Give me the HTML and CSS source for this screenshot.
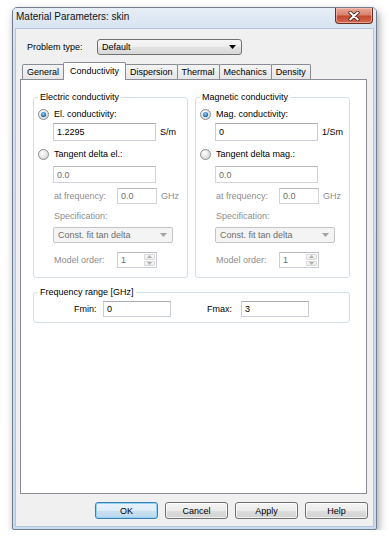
FILE: index.html
```html
<!DOCTYPE html>
<html>
<head>
<meta charset="utf-8">
<title>Material Parameters: skin</title>
<link rel="stylesheet" href="styles.css">
</head>
<body>
<div class="window">
  <div class="titlebar">
    <span class="title">Material Parameters: skin</span>
    <div class="close-btn">
      <svg width="12" height="10" viewBox="0 0 12 10">
        <path d="M2.2 1.6 L9.8 8.4 M9.8 1.6 L2.2 8.4" stroke="#4a2019" stroke-width="3.6" stroke-linecap="round" fill="none"/>
        <path d="M2.2 1.6 L9.8 8.4 M9.8 1.6 L2.2 8.4" stroke="#ffffff" stroke-width="2" stroke-linecap="round" fill="none"/>
      </svg>
    </div>
  </div>
  <div class="client">
    <div class="problem-row">
      <span class="problem-label">Problem type:</span>
      <div class="combo">
        <span>Default</span>
        <svg class="arrow" width="7" height="4" viewBox="0 0 7 4"><path d="M0 0H7L3.5 4Z" fill="#000"/></svg>
      </div>
    </div>
    <div class="tabs">
      <div class="tab">General</div>
      <div class="tab tab-active">Conductivity</div>
      <div class="tab">Dispersion</div>
      <div class="tab">Thermal</div>
      <div class="tab">Mechanics</div>
      <div class="tab">Density</div>
    </div>
    <div class="panel">
      <div class="group-row">
        <fieldset class="group">
          <legend>Electric conductivity</legend>
          <div class="radio-row">
            <svg class="radio" width="11" height="11" viewBox="0 0 11 11">
              <defs><radialGradient id="rg1" cx="0.4" cy="0.35" r="0.7"><stop offset="0" stop-color="#ffffff"/><stop offset="1" stop-color="#d4d4d4"/></radialGradient>
              <radialGradient id="dot1" cx="0.45" cy="0.4" r="0.6"><stop offset="0" stop-color="#8fd3ff"/><stop offset="1" stop-color="#1a5b9a"/></radialGradient></defs>
              <circle cx="5.5" cy="5.5" r="5" fill="url(#rg1)" stroke="#8a8d91"/>
              <circle cx="5.5" cy="5.5" r="2.6" fill="url(#dot1)"/>
            </svg>
            <span>El. conductivity:</span>
          </div>
          <div class="indent field-row row-value">
            <div class="edit edit-wide">1.2295</div>
            <span class="unit">S/m</span>
          </div>
          <div class="radio-row radio-row-2">
            <svg class="radio" width="11" height="11" viewBox="0 0 11 11">
              <defs><radialGradient id="rg2" cx="0.4" cy="0.35" r="0.7"><stop offset="0" stop-color="#ffffff"/><stop offset="1" stop-color="#d4d4d4"/></radialGradient></defs>
              <circle cx="5.5" cy="5.5" r="5" fill="url(#rg2)" stroke="#8a8d91"/>
            </svg>
            <span>Tangent delta el.:</span>
          </div>
          <div class="indent field-row row-tan">
            <div class="edit edit-wide edit-disabled">0.0</div>
          </div>
          <div class="indent field-row row-freq">
            <span class="dim-label">at frequency:</span>
            <div class="edit edit-short edit-disabled">0.0</div>
            <span class="unit dim">GHz</span>
          </div>
          <div class="spec-label dim">Specification:</div>
          <div class="dropdown">
            <span>Const. fit tan delta</span>
            <svg class="arrow" width="7" height="4" viewBox="0 0 7 4"><path d="M0 0H7L3.5 4Z" fill="#a3a3a3"/></svg>
          </div>
          <div class="indent field-row row-order">
            <span class="dim-label">Model order:</span>
            <div class="spin">
              <span class="spin-value">1</span>
              <div class="spin-buttons">
                <div class="spin-btn"><svg width="5" height="3" viewBox="0 0 5 3"><path d="M0 3H5L2.5 0Z" fill="#b0b0b0"/></svg></div>
                <div class="spin-btn"><svg width="5" height="3" viewBox="0 0 5 3"><path d="M0 0H5L2.5 3Z" fill="#b0b0b0"/></svg></div>
              </div>
            </div>
          </div>
        </fieldset>
        <fieldset class="group">
          <legend>Magnetic conductivity</legend>
          <div class="radio-row">
            <svg class="radio" width="11" height="11" viewBox="0 0 11 11">
              <defs><radialGradient id="rg3" cx="0.4" cy="0.35" r="0.7"><stop offset="0" stop-color="#ffffff"/><stop offset="1" stop-color="#d4d4d4"/></radialGradient>
              <radialGradient id="dot3" cx="0.45" cy="0.4" r="0.6"><stop offset="0" stop-color="#8fd3ff"/><stop offset="1" stop-color="#1a5b9a"/></radialGradient></defs>
              <circle cx="5.5" cy="5.5" r="5" fill="url(#rg3)" stroke="#8a8d91"/>
              <circle cx="5.5" cy="5.5" r="2.6" fill="url(#dot3)"/>
            </svg>
            <span>Mag. conductivity:</span>
          </div>
          <div class="indent field-row row-value">
            <div class="edit edit-wide">0</div>
            <span class="unit">1/Sm</span>
          </div>
          <div class="radio-row radio-row-2">
            <svg class="radio" width="11" height="11" viewBox="0 0 11 11">
              <defs><radialGradient id="rg4" cx="0.4" cy="0.35" r="0.7"><stop offset="0" stop-color="#ffffff"/><stop offset="1" stop-color="#d4d4d4"/></radialGradient></defs>
              <circle cx="5.5" cy="5.5" r="5" fill="url(#rg4)" stroke="#8a8d91"/>
            </svg>
            <span>Tangent delta mag.:</span>
          </div>
          <div class="indent field-row row-tan">
            <div class="edit edit-wide edit-disabled">0.0</div>
          </div>
          <div class="indent field-row row-freq">
            <span class="dim-label">at frequency:</span>
            <div class="edit edit-short edit-disabled">0.0</div>
            <span class="unit dim">GHz</span>
          </div>
          <div class="spec-label dim">Specification:</div>
          <div class="dropdown">
            <span>Const. fit tan delta</span>
            <svg class="arrow" width="7" height="4" viewBox="0 0 7 4"><path d="M0 0H7L3.5 4Z" fill="#a3a3a3"/></svg>
          </div>
          <div class="indent field-row row-order">
            <span class="dim-label">Model order:</span>
            <div class="spin">
              <span class="spin-value">1</span>
              <div class="spin-buttons">
                <div class="spin-btn"><svg width="5" height="3" viewBox="0 0 5 3"><path d="M0 3H5L2.5 0Z" fill="#b0b0b0"/></svg></div>
                <div class="spin-btn"><svg width="5" height="3" viewBox="0 0 5 3"><path d="M0 0H5L2.5 3Z" fill="#b0b0b0"/></svg></div>
              </div>
            </div>
          </div>
        </fieldset>
      </div>
      <fieldset class="group group-freq">
        <legend>Frequency range [GHz]</legend>
        <div class="freq-row">
          <span class="fmin-label">Fmin:</span>
          <div class="edit edit-range">0</div>
          <span class="fmax-label">Fmax:</span>
          <div class="edit edit-range">3</div>
        </div>
      </fieldset>
    </div>
    <div class="buttons">
      <div class="btn btn-default">OK</div>
      <div class="btn">Cancel</div>
      <div class="btn">Apply</div>
      <div class="btn">Help</div>
    </div>
  </div>
</div>
</body>
</html>
```

FILE: styles.css
```css
* { box-sizing: border-box; }

html, body {
  margin: 0;
  background: #ffffff;
}

body {
  padding: 7px 0 0 12px;
  font-family: "Liberation Sans", Arial, sans-serif;
  font-size: 9px;
  color: #000;
}

.window {
  width: 365px;
  height: 523px;
  display: flex;
  flex-direction: column;
  border: 1px solid #6f7d8e;
  border-radius: 5px 5px 2px 2px;
  background: linear-gradient(to bottom, #e3ecf6 0, #d3e1f0 40px, #c8dbef 100%);
  box-shadow: 2px 4px 9px rgba(0, 0, 0, 0.35);
}

.titlebar {
  height: 20px;
  display: flex;
  align-items: flex-start;
  padding-left: 3px;
  background: linear-gradient(to bottom, #e6eef7, #d8e4f1);
  border-radius: 4px 4px 0 0;
}

.title {
  line-height: 18px;
  font-size: 10px;
  color: #111;
}

.close-btn {
  margin-left: auto;
  margin-right: 3px;
  width: 38px;
  height: 16px;
  display: flex;
  align-items: center;
  justify-content: center;
  border: 1px solid #6b2c22;
  border-top: none;
  border-radius: 0 0 4px 4px;
  background: linear-gradient(to bottom, #e9a898 0, #d9826f 45%, #c44a32 55%, #d3694f 100%);
  box-shadow: inset 0 0 0 1px rgba(255, 210, 200, 0.55);
}

.client {
  flex: 1;
  margin: 0 2px 2px 2px;
  border: 1px solid #b4c6da;
  background: #f0f0f0;
  display: flex;
  flex-direction: column;
}

.problem-row {
  display: flex;
  align-items: center;
  padding: 10px 0 0 11px;
}

.problem-label {
  width: 70px;
}

.combo {
  width: 145px;
  height: 16px;
  display: flex;
  align-items: center;
  justify-content: space-between;
  padding: 0 5px 0 4px;
  border: 1px solid #707070;
  border-radius: 3px;
  background: linear-gradient(to bottom, #f6f6f6 0, #eeeeee 50%, #e2e2e2 51%, #d8d8d8 100%);
}

.tabs {
  position: relative;
  z-index: 1;
  display: flex;
  align-items: flex-end;
  height: 18px;
  margin: 7px 0 0 6px;
}

.tab {
  height: 15px;
  margin-bottom: 1px;
  margin-left: -1px;
  padding: 0 4px;
  display: flex;
  align-items: center;
  border: 1px solid #898c95;
  border-bottom: none;
  border-radius: 2px 2px 0 0;
  background: linear-gradient(to bottom, #f4f4f4, #e6e6e6);
}

.tab:first-child {
  margin-left: 0;
}

.tab-active {
  height: 18px;
  margin-bottom: 0;
  margin-left: -1px;
  margin-right: -1px;
  padding: 0 6px 2px 6px;
  background: #ffffff;
  position: relative;
  z-index: 1;
}

.tab-active + .tab {
  margin-left: 0;
}

.panel {
  width: 347px;
  height: 415px;
  margin: -1px 0 0 4px;
  border: 1px solid #898c95;
  background: #ffffff;
  padding: 12px 0 0 12px;
}

.group-row {
  display: flex;
  gap: 7px;
}

.group {
  margin: 0;
  padding: 0 0 9px 0;
  min-width: 0;
  width: 155px;
  border: 1px solid #d5dfe5;
  border-radius: 3px;
}

.group legend {
  margin-left: 4px;
  padding: 0 2px;
  line-height: 10px;
  font-size: 9px;
}

.radio-row {
  display: flex;
  align-items: center;
  gap: 5px;
  height: 12px;
  margin-top: 6px;
  padding-left: 4px;
}

.radio-row-2 {
  margin-top: 7px;
}

.radio {
  flex: none;
  display: block;
}

.indent {
  padding-left: 19px;
}

.field-row {
  display: flex;
  align-items: center;
}

.row-value {
  margin-top: 3px;
}

.row-tan {
  margin-top: 6px;
}

.row-freq {
  margin-top: 5px;
}

.row-order {
  margin-top: 9px;
}

.edit {
  height: 18px;
  display: flex;
  align-items: center;
  padding-left: 3px;
  border: 1px solid #c9ced6;
  border-top-color: #abadb3;
  background: #ffffff;
}

.edit-wide {
  width: 103px;
}

.edit-disabled {
  height: 17px;
  color: #6d6d6d;
  border-color: #d2d4d8;
  border-top-color: #b8babe;
}

.edit-short {
  width: 40px;
  height: 16px;
}

.unit {
  margin-left: 4px;
}

.dim,
.dim-label {
  color: #8d8d8d;
}

.dim-label {
  width: 64px;
  padding-left: 1px;
}

.spec-label {
  margin-top: 6px;
  padding-left: 20px;
  line-height: 12px;
}

.dropdown {
  width: 120px;
  height: 16px;
  margin: 5px 0 0 19px;
  display: flex;
  align-items: center;
  justify-content: space-between;
  padding: 0 5px 0 4px;
  border: 1px solid #c2c4c8;
  border-radius: 2px;
  background: #f4f4f4;
  color: #6d6d6d;
}

.spin {
  width: 40px;
  height: 16px;
  display: flex;
  border: 1px solid #c9ced6;
  border-top-color: #b8babe;
  background: #ffffff;
}

.spin-value {
  flex: 1;
  padding-left: 3px;
  color: #6d6d6d;
  line-height: 14px;
}

.spin-buttons {
  width: 13px;
  display: flex;
  flex-direction: column;
  gap: 1px;
  padding: 1px;
}

.spin-btn {
  flex: 1;
  display: flex;
  align-items: center;
  justify-content: center;
  border: 1px solid #d8d8d8;
  border-radius: 1px;
  background: linear-gradient(to bottom, #f7f7f7, #ececec);
}

.spin-btn svg {
  display: block;
}

.group-freq {
  width: 317px;
  margin-top: 9px;
  padding-bottom: 5px;
}

.freq-row {
  display: flex;
  align-items: center;
  margin-top: 4px;
  padding-left: 40px;
}

.fmin-label {
  width: 29px;
}

.fmax-label {
  width: 34px;
  margin-left: 36px;
}

.edit-range {
  width: 68px;
  height: 16px;
}

.buttons {
  display: flex;
  justify-content: flex-end;
  gap: 7px;
  margin-top: 8px;
  padding-right: 5px;
}

.btn {
  width: 63px;
  height: 17px;
  display: flex;
  align-items: center;
  justify-content: center;
  border: 1px solid #707070;
  border-radius: 3px;
  background: linear-gradient(to bottom, #f4f4f4 0, #ebebeb 50%, #dddddd 51%, #d2d2d2 100%);
  box-shadow: inset 0 0 0 1px rgba(255, 255, 255, 0.7);
}

.btn-default {
  border-color: #3c7fb1;
  background: linear-gradient(to bottom, #eaf4fb 0, #dcecf7 50%, #c9e0f1 51%, #bcd8ee 100%);
  box-shadow: inset 0 0 0 1px #8fd3f5;
}
```
